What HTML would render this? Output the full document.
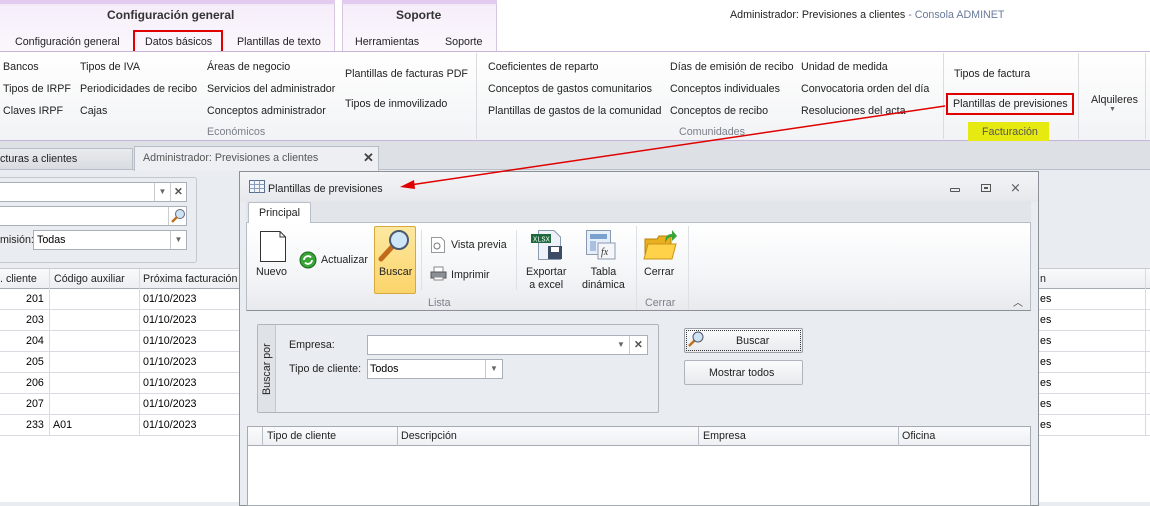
<!DOCTYPE html>
<html><head><meta charset="utf-8"><style>
*{box-sizing:border-box;margin:0;padding:0}
body{width:1150px;height:502px;overflow:hidden;position:relative;background:#e9ecf0;font-family:"Liberation Sans",Tahoma,sans-serif;font-size:10.7px;color:#222}
.a{position:absolute;white-space:nowrap}
.t{position:absolute;white-space:nowrap}
</style></head><body>
<div class="a" style="left:0;top:0;width:1150px;height:52px;background:#fff"></div>
<div class="a" style="left:0;top:0;width:335px;height:52px;background:linear-gradient(#e6d6f0,#f6eefa 12%,#fbf8fd);border-right:1px solid #d6c6e0"></div>
<div class="a" style="left:0;top:0;width:335px;height:4px;background:#e3cbef"></div>
<div class="a" style="left:342px;top:0;width:155px;height:52px;background:linear-gradient(#e6d6f0,#f6eefa 12%,#fbf8fd);border-left:1px solid #d6c6e0;border-right:1px solid #d6c6e0"></div>
<div class="a" style="left:342px;top:0;width:155px;height:4px;background:#e3cbef"></div>
<div class="t" style="left:107px;top:8px;font-weight:bold;font-size:12px;color:#333">Configuración general</div>
<div class="t" style="left:396px;top:8px;font-weight:bold;font-size:12px;color:#333">Soporte</div>
<div class="t" style="left:15px;top:36px">Configuración general</div>
<div class="a" style="left:133px;top:30px;width:90px;height:24px;border:2px solid #e00000"></div>
<div class="t" style="left:145px;top:36px">Datos básicos</div>
<div class="t" style="left:237px;top:36px">Plantillas de texto</div>
<div class="t" style="left:355px;top:36px">Herramientas</div>
<div class="t" style="left:445px;top:36px">Soporte</div>
<div class="t" style="left:730px;top:9px">Administrador: Previsiones a clientes <span style="color:#6a7a9a">- Consola ADMINET</span></div>
<div class="a" style="left:0;top:51px;width:1150px;height:90px;background:linear-gradient(#fff,#f2f3f5);border-top:1px solid #c8b4d6;border-bottom:1px solid #c8b4d6"></div>
<div class="a" style="left:476px;top:53px;width:1px;height:86px;background:#dcdce0"></div>
<div class="a" style="left:943px;top:53px;width:1px;height:86px;background:#dcdce0"></div>
<div class="a" style="left:1078px;top:53px;width:1px;height:86px;background:#dcdce0"></div>
<div class="a" style="left:1145px;top:53px;width:1px;height:86px;background:#dcdce0"></div>
<div class="t" style="left:3px;top:61px">Bancos</div>
<div class="t" style="left:3px;top:83px">Tipos de IRPF</div>
<div class="t" style="left:3px;top:105px">Claves IRPF</div>
<div class="t" style="left:80px;top:61px">Tipos de IVA</div>
<div class="t" style="left:80px;top:83px">Periodicidades de recibo</div>
<div class="t" style="left:80px;top:105px">Cajas</div>
<div class="t" style="left:207px;top:61px">Áreas de negocio</div>
<div class="t" style="left:207px;top:83px">Servicios del administrador</div>
<div class="t" style="left:207px;top:105px">Conceptos administrador</div>
<div class="t" style="left:207px;top:126px;color:#7a7f8a">Económicos</div>
<div class="t" style="left:345px;top:68px">Plantillas de facturas PDF</div>
<div class="t" style="left:345px;top:98px">Tipos de inmovilizado</div>
<div class="t" style="left:488px;top:61px">Coeficientes de reparto</div>
<div class="t" style="left:488px;top:83px">Conceptos de gastos comunitarios</div>
<div class="t" style="left:488px;top:105px">Plantillas de gastos de la comunidad</div>
<div class="t" style="left:670px;top:61px">Días de emisión de recibo</div>
<div class="t" style="left:670px;top:83px">Conceptos individuales</div>
<div class="t" style="left:670px;top:105px">Conceptos de recibo</div>
<div class="t" style="left:679px;top:126px;color:#7a7f8a">Comunidades</div>
<div class="t" style="left:801px;top:61px">Unidad de medida</div>
<div class="t" style="left:801px;top:83px">Convocatoria orden del día</div>
<div class="t" style="left:801px;top:105px">Resoluciones del acta</div>
<div class="t" style="left:954px;top:68px">Tipos de factura</div>
<div class="a" style="left:946px;top:93px;width:128px;height:22px;border:2px solid #e00000"></div>
<div class="t" style="left:953px;top:98px">Plantillas de previsiones</div>
<div class="a" style="left:968px;top:122px;width:81px;height:19px;background:#e6ea10"></div>
<div class="t" style="left:982px;top:126px;color:#555">Facturación</div>
<div class="t" style="left:1091px;top:94px">Alquileres</div>
<div class="t" style="left:1109px;top:106px;font-size:7px;color:#666">▼</div>
<div class="a" style="left:0;top:141px;width:1150px;height:29px;background:#dde1e6;border-bottom:1px solid #b8bec8"></div>
<div class="a" style="left:0;top:148px;width:133px;height:22px;background:linear-gradient(#e9ebee,#d8dce1);border:1px solid #b8bec8;border-left:none"></div>
<div class="t" style="left:0;top:153px">cturas a clientes</div>
<div class="a" style="left:134px;top:146px;width:245px;height:25px;background:#edeff2;border:1px solid #b8bec8;border-bottom:none"></div>
<div class="t" style="left:143px;top:152px;color:#555">Administrador: Previsiones a clientes</div>
<div class="t" style="left:363px;top:150px;font-weight:bold;font-size:13px;color:#444">✕</div>
<div class="a" style="left:-3px;top:177px;width:200px;height:86px;border:1px solid #c4c8cf;border-radius:3px"></div>
<div class="a" style="left:-2px;top:182px;width:189px;height:20px;background:#fff;border:1px solid #aab0ba"></div>
<div class="a" style="left:154px;top:183px;width:16px;height:18px;border-left:1px solid #ccc;font-size:8px;color:#666;text-align:center;line-height:18px">▼</div>
<div class="a" style="left:170px;top:183px;width:16px;height:18px;border-left:1px solid #ccc;font-weight:bold;color:#555;text-align:center;line-height:18px">✕</div>
<div class="a" style="left:-2px;top:206px;width:189px;height:20px;background:#fff;border:1px solid #aab0ba"></div>
<div class="a" style="left:168px;top:207px;width:18px;height:18px;border-left:1px solid #ccc"><svg width="18" height="18"><circle cx="11" cy="7" r="4.5" fill="#cde4f6" stroke="#667"/><path d="M8 10 L3 15" stroke="#c07020" stroke-width="2.5"/></svg></div>
<div class="t" style="left:0;top:234px">misión:</div>
<div class="a" style="left:33px;top:230px;width:154px;height:20px;background:#fff;border:1px solid #aab0ba"></div>
<div class="t" style="left:37px;top:234px;color:#000">Todas</div>
<div class="a" style="left:170px;top:231px;width:16px;height:18px;border-left:1px solid #ccc;font-size:8px;color:#666;text-align:center;line-height:18px">▼</div>
<div class="a" style="left:0;top:268px;width:1150px;height:234px;background:#fff"></div>
<div class="a" style="left:0;top:268px;width:1150px;height:21px;background:linear-gradient(#f9fafb,#eceef1);border-top:1px solid #c8ccd2;border-bottom:1px solid #a6abb3"></div>
<div class="t" style="left:0;top:273px">. cliente</div>
<div class="t" style="left:54px;top:273px">Código auxiliar</div>
<div class="t" style="left:143px;top:273px">Próxima facturación</div>
<div class="t" style="left:1040px;top:273px">n</div>
<div class="a" style="left:49px;top:269px;width:1px;height:166px;background:#d8dbdf"></div>
<div class="a" style="left:139px;top:269px;width:1px;height:166px;background:#d8dbdf"></div>
<div class="a" style="left:1145px;top:269px;width:1px;height:166px;background:#d8dbdf"></div>
<div id="rows"></div>
<div class="a" style="left:239px;top:171px;width:800px;height:335px;background:#e9ecf0;border:1px solid #8a8f98"></div>
<div class="a" style="left:240px;top:172px;width:798px;height:30px;background:linear-gradient(#f3f4f6,#e6e8ec)"></div>
<svg class="a" style="left:249px;top:180px" width="16" height="13"><rect x=".5" y=".5" width="15" height="12" fill="#f2f6fb" stroke="#5a6e92"/><path d="M.5 4.5H15.5M.5 8.5H15.5M5.5 .5V12.5M10.5 .5V12.5" stroke="#8a9cbc"/></svg>
<div class="t" style="left:268px;top:183px">Plantillas de previsiones</div>
<div class="a" style="left:950px;top:188px;width:10px;height:4px;border:1px solid #555;border-radius:1px"></div>
<div class="a" style="left:981px;top:184px;width:10px;height:8px;border:1px solid #555"></div>
<div class="a" style="left:984px;top:187px;width:4px;height:2px;border:1px solid #555"></div>
<div class="t" style="left:1010px;top:180px;font-size:13px;color:#555">⨯</div>
<div class="a" style="left:246px;top:201px;width:785px;height:22px;background:#e2e5e9;border-bottom:1px solid #b8bec8"></div>
<div class="a" style="left:248px;top:202px;width:63px;height:22px;background:#fff;border:1px solid #b8bec8;border-bottom:none;border-radius:2px 2px 0 0"></div>
<div class="t" style="left:259px;top:207px">Principal</div>
<div class="a" style="left:246px;top:223px;width:785px;height:88px;background:linear-gradient(#fff,#f4f5f7 60%,#e8eaed);border-bottom:1px solid #8a8f98;border-left:1px solid #b8bec8;border-right:1px solid #b8bec8"></div>
<svg class="a" style="left:260px;top:231px" width="26" height="31"><path d="M.5 .5H20L25.5 6V30.5H.5Z" fill="#fff" stroke="#333"/><path d="M20 .5V6H25.5" fill="none" stroke="#333"/></svg>
<div class="t" style="left:256px;top:266px">Nuevo</div>
<svg class="a" style="left:299px;top:251px" width="18" height="18"><circle cx="9" cy="9" r="8" fill="#3aa537" stroke="#1d6a1c"/><path d="M5 9a4 4 0 0 1 7-2.5M13 9a4 4 0 0 1-7 2.5" stroke="#fff" stroke-width="1.8" fill="none"/></svg>
<div class="t" style="left:321px;top:254px">Actualizar</div>
<div class="a" style="left:374px;top:226px;width:42px;height:68px;background:linear-gradient(#fde8a0,#fbd46a);border:1px solid #d6a840;border-radius:2px"></div>
<svg class="a" style="left:378px;top:228px" width="34" height="34"><path d="M14 19 L3 31" stroke="#c06a1a" stroke-width="5" stroke-linecap="round"/><circle cx="21" cy="12" r="9" fill="#cfe6f8" stroke="#4a5a70" stroke-width="2"/></svg>
<div class="t" style="left:379px;top:266px">Buscar</div>
<div class="a" style="left:421px;top:230px;width:1px;height:60px;background:#dde0e4"></div>
<svg class="a" style="left:431px;top:237px" width="14" height="16"><path d="M.5.5H10L13.5 4V15.5H.5Z" fill="#fff" stroke="#999"/><circle cx="6" cy="9" r="3" fill="none" stroke="#777"/></svg>
<div class="t" style="left:451px;top:239px">Vista previa</div>
<svg class="a" style="left:430px;top:266px" width="17" height="15"><rect x="4" y="1" width="9" height="6" fill="#fff" stroke="#888"/><rect x="1" y="6" width="15" height="6" fill="#8a9098" stroke="#555"/><rect x="4" y="11" width="9" height="3" fill="#fff" stroke="#888"/></svg>
<div class="t" style="left:451px;top:269px">Imprimir</div>
<div class="t" style="left:428px;top:297px;color:#7a7f8a">Lista</div>
<div class="a" style="left:516px;top:230px;width:1px;height:60px;background:#dde0e4"></div>
<svg class="a" style="left:530px;top:230px" width="34" height="30"><path d="M8.5 .5H24L30.5 7V29.5H8.5Z" fill="#eef2f8" stroke="#8a9ab0"/><rect x="1" y="4" width="20" height="9" fill="#1e6a3e"/><text x="3" y="11.5" font-size="7" fill="#fff" font-family="Liberation Mono">XLSX</text><rect x="18" y="16" width="14" height="13" fill="#3c4c64"/><rect x="21" y="17" width="8" height="5" fill="#fff"/></svg>
<div class="t" style="left:526px;top:266px;text-align:center;line-height:13px">Exportar<br>a excel</div>
<svg class="a" style="left:586px;top:230px" width="30" height="30"><rect x=".5" y=".5" width="24" height="24" fill="#e6eef8" stroke="#8a9ab0"/><rect x="4" y="4" width="17" height="5" fill="#7aa0d0"/><rect x="4" y="11" width="6" height="10" fill="#aac0e0"/><rect x="12" y="13" width="17" height="16" fill="#f4f6f9" stroke="#8a9ab0"/><text x="15" y="25" font-size="10" font-style="italic" font-family="Liberation Serif" fill="#333">fx</text></svg>
<div class="t" style="left:582px;top:266px;text-align:center;line-height:13px">Tabla<br>dinámica</div>
<div class="a" style="left:636px;top:226px;width:1px;height:84px;background:#dde0e4"></div>
<svg class="a" style="left:643px;top:229px" width="34" height="32"><path d="M2 10H14L16 7H28V28H2Z" fill="#e8b020" stroke="#b88010"/><path d="M5 15H33L29 30H1Z" fill="#ffd24a" stroke="#c89418"/><path d="M22 14C22 7 25 5 29 5V1L34 7L29 12V8C26 8 24 10 22 14Z" fill="#3aa537"/></svg>
<div class="t" style="left:644px;top:266px">Cerrar</div>
<div class="t" style="left:645px;top:297px;color:#7a7f8a">Cerrar</div>
<div class="a" style="left:688px;top:226px;width:1px;height:84px;background:#dde0e4"></div>
<div class="t" style="left:1013px;top:294px;font-size:10px;color:#444">︿</div>
<div class="a" style="left:257px;top:324px;width:402px;height:89px;border:1px solid #b0b5bd;border-radius:2px"></div>
<div class="a" style="left:258px;top:325px;width:18px;height:87px;background:#dfe2e6;border-right:1px solid #c4c8cf"></div>
<div class="t" style="left:261px;top:395px;transform:rotate(-90deg);transform-origin:0 0">Buscar por</div>
<div class="t" style="left:289px;top:339px">Empresa:</div>
<div class="a" style="left:367px;top:335px;width:281px;height:20px;background:#fff;border:1px solid #aab0ba"></div>
<div class="a" style="left:613px;top:336px;width:16px;height:18px;font-size:8px;color:#666;text-align:center;line-height:18px">▼</div>
<div class="a" style="left:629px;top:336px;width:18px;height:18px;border-left:1px solid #ccc;font-weight:bold;color:#555;text-align:center;line-height:18px">✕</div>
<div class="t" style="left:289px;top:363px">Tipo de cliente:</div>
<div class="a" style="left:367px;top:359px;width:136px;height:20px;background:#fff;border:1px solid #aab0ba"></div>
<div class="t" style="left:370px;top:363px;color:#000">Todos</div>
<div class="a" style="left:485px;top:360px;width:17px;height:18px;border-left:1px solid #ccc;font-size:8px;color:#666;text-align:center;line-height:18px">▼</div>
<div class="a" style="left:684px;top:328px;width:119px;height:25px;background:linear-gradient(#fafbfc,#e8eaed);border:1px solid #9aa0a8;border-radius:2px"></div>
<div class="a" style="left:686px;top:330px;width:115px;height:21px;border:1px dotted #333"></div>
<svg class="a" style="left:687px;top:330px" width="18" height="18"><path d="M8 10 L2 16" stroke="#c07020" stroke-width="2.5"/><circle cx="11" cy="7" r="5" fill="#cde4f6" stroke="#556"/></svg>
<div class="t" style="left:736px;top:335px">Buscar</div>
<div class="a" style="left:684px;top:360px;width:119px;height:25px;background:linear-gradient(#fafbfc,#e8eaed);border:1px solid #b0b5bd;border-radius:2px"></div>
<div class="t" style="left:709px;top:367px">Mostrar todos</div>
<div class="a" style="left:247px;top:426px;width:784px;height:80px;background:#fff;border:1px solid #a6abb3"></div>
<div class="a" style="left:248px;top:427px;width:782px;height:19px;background:linear-gradient(#fafbfc,#eef0f3);border-bottom:1px solid #a6abb3"></div>
<div class="a" style="left:262px;top:427px;width:1px;height:19px;background:#b8bec8"></div>
<div class="a" style="left:397px;top:427px;width:1px;height:19px;background:#b8bec8"></div>
<div class="a" style="left:698px;top:427px;width:1px;height:19px;background:#b8bec8"></div>
<div class="a" style="left:898px;top:427px;width:1px;height:19px;background:#b8bec8"></div>
<div class="t" style="left:267px;top:430px">Tipo de cliente</div>
<div class="t" style="left:401px;top:430px">Descripción</div>
<div class="t" style="left:703px;top:430px">Empresa</div>
<div class="t" style="left:902px;top:430px">Oficina</div>
<svg class="a" style="left:0;top:0" width="1150" height="502"><line x1="945" y1="106" x2="410" y2="185" stroke="#e00000" stroke-width="1.5"/><path d="M400 187 L414 180 L415 189Z" fill="#e00000"/></svg>
<script>
var r=[["201",""],["203",""],["204",""],["205",""],["206",""],["207",""],["233","A01"]],h="";
r.forEach(function(x,i){var y=289+i*21;
h+='<div class="a" style="left:0;top:'+(y+20)+'px;width:239px;height:1px;background:#d8dbdf"></div>';
h+='<div class="a" style="left:1039px;top:'+(y+20)+'px;width:111px;height:1px;background:#d8dbdf"></div>';
h+='<div class="t" style="left:26px;top:'+(y+4)+'px;color:#000">'+x[0]+'</div>';
h+='<div class="t" style="left:53px;top:'+(y+4)+'px;color:#000">'+x[1]+'</div>';
h+='<div class="t" style="left:143px;top:'+(y+4)+'px;color:#000">01/10/2023</div>';
h+='<div class="t" style="left:1040px;top:'+(y+4)+'px;color:#000">es</div>';});
document.getElementById("rows").innerHTML=h;
</script>
</body></html>
